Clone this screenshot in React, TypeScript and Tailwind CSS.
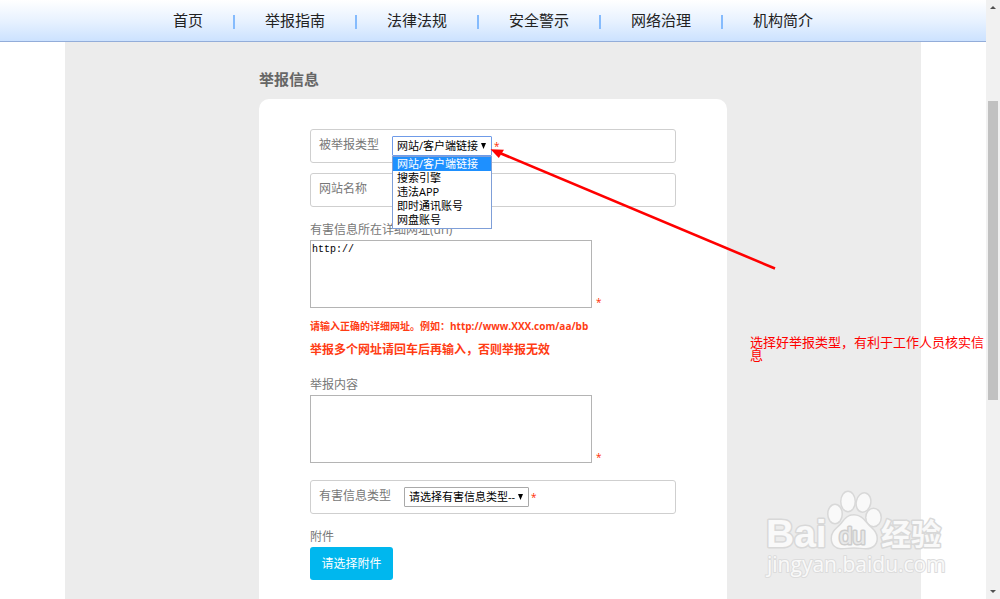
import React, { Fragment, ReactNode, useState } from 'react'
import clsx from 'clsx'

const NAV_ITEMS = ['首页', '举报指南', '法律法规', '安全警示', '网络治理', '机构简介']

const SITE_TYPES = ['网站/客户端链接', '搜索引擎', '违法APP', '即时通讯账号', '网盘账号']

const HARM_TYPES = ['请选择有害信息类型--']

const Required: React.FC = () => (
  <span className="text-[10px] leading-3 text-[#ff2a00]">*</span>
)

interface FieldRowProps {
  id: string
  label: string
  children: ReactNode
}

const FieldRow: React.FC<FieldRowProps> = ({ id, label, children }) => (
  <div className="flex h-[34px] items-center rounded-[3px] border border-[#cfcfcf] px-2">
    <label htmlFor={id} className="mr-[13px] shrink-0 pb-0.5 text-xs text-[#777]">
      {label}
    </label>
    {children}
  </div>
)

interface TypeSelectProps {
  id: string
  value: string
  options: string[]
  onChange: (value: string) => void
  className: string
  open?: boolean
}

const TypeSelect: React.FC<TypeSelectProps> = ({
  id,
  value,
  options,
  onChange,
  className,
  open = false
}) => (
  <div className={clsx('relative mr-0.5', className)}>
    <select
      id={id}
      value={value}
      onChange={(e) => onChange(e.target.value)}
      className={clsx(
        'block h-5 w-full appearance-none rounded-[1px] border bg-white pl-1 text-[11px] leading-4 text-black outline-none',
        open ? 'border-[#6f9be8]' : 'border-[#a9a9a9]'
      )}
    >
      {options.map((option) => (
        <option key={option}>{option}</option>
      ))}
    </select>
    <svg
      className="pointer-events-none absolute right-1.5 top-[7px] h-[6px] w-[5px]"
      viewBox="0 0 5 6"
      fill="#000"
    >
      <path d="M0 0h5L2.5 6z" />
    </svg>
    {open && (
      <ul
        role="listbox"
        className="absolute left-0 top-full z-10 w-full border border-[#7f9fd8] bg-white pb-px text-[11px] leading-[14px] text-black"
      >
        {options.map((option) => (
          <li
            key={option}
            role="option"
            aria-selected={option === value}
            onClick={() => onChange(option)}
            className={clsx('pl-1', option === value && 'bg-[#1e90ff] text-white')}
          >
            {option}
          </li>
        ))}
      </ul>
    )}
  </div>
)

interface TextBlockProps {
  id: string
  label: string
  defaultValue?: string
}

const TextBlock: React.FC<TextBlockProps> = ({ id, label, defaultValue }) => (
  <div className="mt-[13px]">
    <label htmlFor={id} className="block text-xs leading-5 text-[#777]">
      {label}
    </label>
    <div className="flex items-end gap-1">
      <textarea
        id={id}
        defaultValue={defaultValue}
        className="block h-[68px] w-[282px] resize-none border border-[#b4b4b4] bg-white px-px py-[3px] font-['Liberation_Mono','Noto_Sans_CJK_SC',monospace] text-[10px] leading-3 text-black outline-none"
      />
      <Required />
    </div>
  </div>
)

const Watermark: React.FC = () => (
  <svg
    className="pointer-events-none absolute bottom-[21px] right-[52px] z-20 h-[90px] w-[184px]"
    viewBox="0 0 184 90"
    fill="#f9f9f9"
    stroke="#d8d8d8"
    strokeWidth="3"
    strokeLinejoin="round"
    paintOrder="stroke"
  >
    <text x="2" y="59" fontSize="39" fontWeight="700" fontFamily="Liberation Sans, sans-serif">
      Bai
    </text>
    <ellipse cx="71" cy="26" rx="6.5" ry="9" />
    <ellipse cx="84" cy="13.5" rx="6.5" ry="9.5" />
    <ellipse cx="99.5" cy="14.5" rx="6.5" ry="9" transform="rotate(12 99.5 14.5)" />
    <ellipse cx="109.5" cy="29.5" rx="7" ry="8.5" />
    <path d="M90 27.5c-7 0-9.5 5-12.5 8.500-4 4.500-9.500 7.500-9.500 14.500 0 6 4 9.500 9 9.500 5 0 8-.8 13-.8s8 .8 12 .8c6 0 10.500-3.500 10.500-9.500 0-7-5.500-10-9.500-14.500-3.500-4-6.500-8.500-13-8.500z" />
    <text
      x="75"
      y="56"
      fontSize="24"
      fontWeight="400"
      fontFamily="Liberation Sans, sans-serif"
      fill="#e8e8e8"
      stroke="#cdcdcd"
      strokeWidth="3"
    >
      du
    </text>
    <text x="117" y="57" fontSize="30" fontWeight="700" fontFamily="Noto Sans CJK SC, sans-serif">
      经验
    </text>
    <text x="3" y="84" fontSize="21" strokeWidth="2" stroke="#dcdcdc" fontFamily="Open Sans, sans-serif">
      jingyan.baidu.com
    </text>
  </svg>
)

const ScrollBar: React.FC = () => (
  <div className="flex w-3.5 shrink-0 flex-col items-center bg-[#f1f1f1] py-1.5">
    <svg className="h-[3px] w-[6px]" viewBox="0 0 6 3" fill="#505050">
      <path d="M0 3h6L3 0z" />
    </svg>
    <div className="mt-[92px] h-[299px] w-2.5 bg-[#c1c1c1]" />
    <svg className="mt-auto h-[3px] w-[6px]" viewBox="0 0 6 3" fill="#505050">
      <path d="M0 0h6L3 3z" />
    </svg>
  </div>
)

const App: React.FC = () => {
  const [siteType, setSiteType] = useState(SITE_TYPES[0])
  const [harmType, setHarmType] = useState(HARM_TYPES[0])

  return (
    <div className="relative flex min-h-screen overflow-hidden bg-white font-['Open_Sans','Noto_Sans_CJK_SC',sans-serif]">
      <div className="flex min-w-0 flex-1 flex-col">
        <nav className="flex h-[42px] shrink-0 items-center justify-center gap-[30px] border-b border-[#93add9] bg-linear-to-b from-white via-[#e8f2ff] to-[#cce2ff]">
          {NAV_ITEMS.map((item, index) => (
            <Fragment key={item}>
              {index > 0 && <span className="mt-0.5 h-3.5 w-0.5 bg-[#85bbfd]" />}
              <a href="#" className="pb-0.5 text-[15px] leading-5 text-[#222]">
                {item}
              </a>
            </Fragment>
          ))}
        </nav>

        <main className="relative mx-auto flex w-full max-w-[856px] flex-1 flex-col items-center bg-[#ececec] pt-[25px]">
          <div className="flex w-full max-w-[468px] flex-1 flex-col">
            <h1 className="mb-2 text-[15px] font-bold leading-6 text-[#666]">举报信息</h1>

            <form className="flex-1 rounded-t-[10px] bg-white px-[51px] pb-4 pt-[30px]">
              <div className="flex flex-col gap-2.5">
                <FieldRow id="site-type" label="被举报类型">
                  <TypeSelect
                    id="site-type"
                    className="w-[100px]"
                    value={siteType}
                    options={SITE_TYPES}
                    onChange={setSiteType}
                    open
                  />
                  <Required />
                </FieldRow>
                <FieldRow id="site-name" label="网站名称">
                  <input id="site-name" type="text" className="min-w-0 flex-1 text-xs outline-none" />
                </FieldRow>
              </div>

              <TextBlock id="site-url" label="有害信息所在详细网址(url)" defaultValue="http://" />

              <div className="mt-1.5 font-bold text-[#ff3c14]">
                <p className="whitespace-nowrap text-[10px] leading-6">
                  请输入正确的详细网址。例如：http://www.XXX.com/aa/bb
                </p>
                <p className="text-xs leading-6">举报多个网址请回车后再输入，否则举报无效</p>
              </div>

              <TextBlock id="content" label="举报内容" />

              <div className="mt-[17px]">
                <FieldRow id="harm-type" label="有害信息类型">
                  <TypeSelect
                    id="harm-type"
                    className="w-[125px]"
                    value={harmType}
                    options={HARM_TYPES}
                    onChange={setHarmType}
                  />
                  <Required />
                </FieldRow>
              </div>

              <label htmlFor="attachment" className="mt-[13px] block text-xs leading-5 text-[#777]">
                附件
              </label>
              <button
                id="attachment"
                type="button"
                className="block h-[33px] w-[83px] rounded-[3px] bg-[#00b7ee] text-xs text-white"
              >
                请选择附件
              </button>
            </form>
          </div>

          {/* pointer to the open type list */}
          <svg
            className="pointer-events-none absolute left-[424px] top-[104px] z-20 h-[126px] w-[290px]"
            viewBox="0 0 290 126"
          >
            <path d="M12 7.5L286 122.5" stroke="#f00" strokeWidth="2.6" fill="none" />
            <path d="M1.5 3.2L15 3.7L9.8 12z" fill="#f00" />
          </svg>
        </main>
      </div>

      <ScrollBar />

      <p className="absolute right-2.5 top-[336px] z-20 w-60 text-[13px] leading-[13px] text-[#f00]">
        选择好举报类型，有利于工作人员核实信息
      </p>
      <Watermark />
    </div>
  )
}

export default App
